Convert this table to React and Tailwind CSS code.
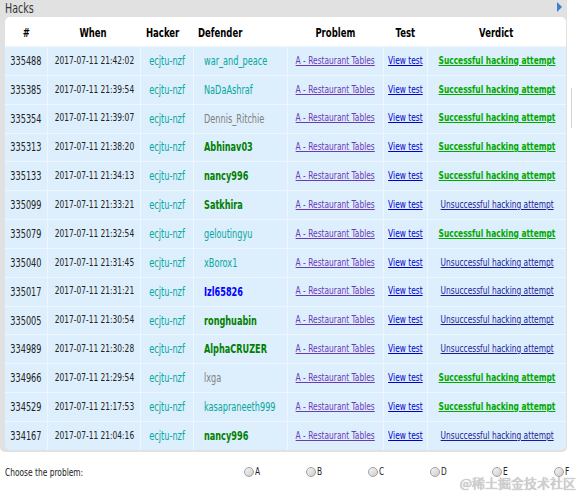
const rows = [
  ['335488', '2017-07-11 21:42:02', 'war_and_peace', 'teal', true],
  ['335385', '2017-07-11 21:39:54', 'NaDaAshraf', 'teal', true],
  ['335354', '2017-07-11 21:39:07', 'Dennis_Ritchie', 'gray', true],
  ['335313', '2017-07-11 21:38:20', 'Abhinav03', 'green', true],
  ['335133', '2017-07-11 21:34:13', 'nancy996', 'green', true],
  ['335099', '2017-07-11 21:33:21', 'Satkhira', 'green', false],
  ['335079', '2017-07-11 21:32:54', 'geloutingyu', 'teal', true],
  ['335040', '2017-07-11 21:31:45', 'xBorox1', 'teal', false],
  ['335017', '2017-07-11 21:31:21', 'Izl65826', 'blue', false],
  ['335005', '2017-07-11 21:30:54', 'ronghuabin', 'green', false],
  ['334989', '2017-07-11 21:30:28', 'AlphaCRUZER', 'green', false],
  ['334966', '2017-07-11 21:29:54', 'lxga', 'gray', true],
  ['334529', '2017-07-11 21:17:53', 'kasapraneeth999', 'teal', true],
  ['334167', '2017-07-11 21:04:16', 'nancy996', 'green', false],
];

const handleClass = {
  teal: 'text-[#03a89e]',
  gray: 'text-[#808080]',
  green: 'text-[#008000] font-bold',
  blue: 'text-[#0000ff] font-bold',
};

const cols = 'grid grid-cols-[42px_93px_53px_94px_96px_44px_139px]';
const cell = 'h-full flex items-center justify-center border-l border-[#eef6ff] min-w-0';

// the screenshot's text is squeezed horizontally, so narrow each run of text
function N({ left, className = '', children }) {
  return (
    <span className={`inline-block whitespace-nowrap scale-x-[0.68] ${left ? 'origin-left' : 'origin-center'} ${className}`}>
      {children}
    </span>
  );
}

export default function App() {
  return (
    <div className="w-[577px] h-[494px] bg-white overflow-hidden font-['DejaVu_Sans','Liberation_Sans',sans-serif] text-[11px] text-black">
      <div className="flex">
        {/* Hacks panel */}
        <div className="w-[567px] shrink-0 bg-[#e1e1e1] rounded-b-[5px] pb-[2px]">
          <div className="h-[17px] flex items-center justify-between pl-[5px] pr-[5px]">
            <N left className="text-[14px] leading-none text-[#333] mt-[-2px]">Hacks</N>
            <svg width="6" height="10" viewBox="0 0 6 10" className="mt-[-4px]">
              <path d="M1 0 L6 5 L1 10 Z" fill="#3b7fd0" />
            </svg>
          </div>
          <div className="ml-[5px] w-[561px] rounded-[5px] overflow-hidden">
            <div className={`${cols} h-[29px] pt-[3px] bg-white font-bold text-[12.5px] items-center`}>
              <div className="text-center"><N>#</N></div>
              <div className="text-center"><N>When</N></div>
              <div className="pl-[6px]"><N left>Hacker</N></div>
              <div className="pl-[5px]"><N left>Defender</N></div>
              <div className="text-center"><N>Problem</N></div>
              <div className="text-center"><N>Test</N></div>
              <div className="text-center"><N>Verdict</N></div>
            </div>
            {rows.map(([id, when, handle, color, ok]) => (
              <div key={id} className={`${cols} h-[28.85px] bg-[#ddeefc] border-t border-[#eef6ff] items-center`}>
                <div className="h-full flex items-center justify-center min-w-0">
                  <N className="text-[12px] text-[#222]">{id}</N>
                </div>
                <div className={cell}>
                  <N className="text-[11px] text-[#222]">{when}</N>
                </div>
                <div className={cell}>
                  <N className="text-[12px] text-[#03a89e]">ecjtu-nzf</N>
                </div>
                <div className={`${cell} !justify-start pl-[10px]`}>
                  <N left className={`text-[12px] ${handleClass[color]}`}>{handle}</N>
                </div>
                <div className={cell}>
                  <N><a href="#" className="underline text-[#6a3ab8]">A - Restaurant Tables</a></N>
                </div>
                <div className={cell}>
                  <N><a href="#" className="underline text-[#0000cc]">View test</a></N>
                </div>
                <div className={cell}>
                  {ok ? (
                    <N><a href="#" className="underline font-bold text-[#00a900]">Successful hacking attempt</a></N>
                  ) : (
                    <N><a href="#" className="underline text-[#1a1a9c]">Unsuccessful hacking attempt</a></N>
                  )}
                </div>
              </div>
            ))}
          </div>
        </div>
        <div className="flex-1 pt-[88px]">
          <div className="ml-[4px] h-[40px] border-l border-[#d4d4d4]" />
        </div>
      </div>

      {/* Problem filter */}
      <div className="relative h-[41px] flex items-center">
        <span className="pl-[5px] w-[244px] shrink-0 mt-[2px]">
          <N left className="text-[11px] text-[#222]">Choose the problem:</N>
        </span>
        <div className="flex shrink-0">
          {['A', 'B', 'C', 'D', 'E', 'F'].map((l) => (
            <label key={l} className="w-[62px] last:w-[22px] flex items-center gap-[1px] text-[11px] text-[#222]">
              <span className="w-[10px] h-[10px] shrink-0 rounded-full border border-[#a0a0a0] bg-gradient-to-br from-[#f6f6f6] to-[#cdcdcd]" />
              <N left>{l}</N>
            </label>
          ))}
        </div>
        <span className="absolute right-[1px] bottom-[0px] text-[13px] text-[#d0d0d0] font-['Noto_Sans_CJK_SC',sans-serif] [text-shadow:0_0_1px_#999]">
          @稀土掘金技术社区
        </span>
      </div>
    </div>
  );
}
